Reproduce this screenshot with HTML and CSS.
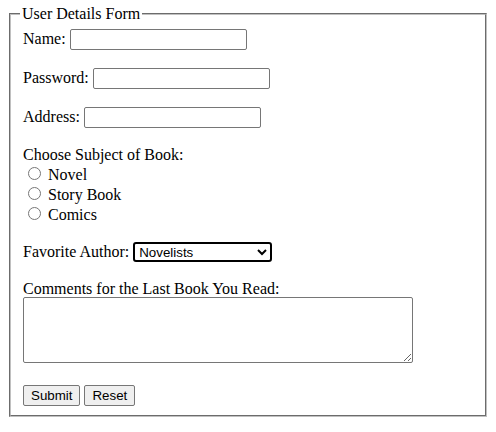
FILE: index.html
```html
<!DOCTYPE html>
<html>
<head>
<meta charset="utf-8">
<title>User Details Form</title>
<link rel="stylesheet" href="styles.css">
</head>
<body class="page">
<form class="user-form">
<fieldset class="form-box">
<legend class="form-legend">User Details Form</legend>
Name: <input class="field" type="text" name="name"><br><br>
Password: <input class="field" type="password" name="password"><br><br>
Address: <input class="field" type="text" name="address"><br><br>
Choose Subject of Book:<br>
<input class="radio" type="radio" name="subject" value="novel"> Novel<br>
<input class="radio" type="radio" name="subject" value="story"> Story Book<br>
<input class="radio" type="radio" name="subject" value="comics"> Comics<br>
<br>
Favorite Author: <select class="author" name="author">
<option>Novelists</option>
<option>Story Writers</option>
<option>Comic Artists</option>
</select><br><br>
Comments for the Last Book You Read:<br>
<textarea class="comments" name="comments"></textarea><br><br>
<input class="btn" type="submit" value="Submit"> <input class="btn" type="reset" value="Reset">
</fieldset>
</form>
</body>
</html>
```
FILE: styles.css
```css
.page {
  margin: 5px 8px 8px 8px;
  font-family: "Liberation Serif", "Times New Roman", serif;
  font-size: 16px;
  color: #000;
  background: #fff;
}
.user-form {
  margin: 0;
}
.form-box {
  margin: 0 1px;
  padding: 6px 12px 9px 12px;
  border: 2px groove #c0c0c0;
}
.form-legend {
  padding: 0 2px;
  margin-left: -3px;
}
.field {
  box-sizing: border-box;
  width: 177px;
  height: 21px;
  font-family: "Liberation Sans", Arial, sans-serif;
  font-size: 13.333px;
  border: 1px solid #767676;
  border-radius: 2px;
  padding: 1px 2px;
  margin: 0;
}
.radio {
  margin: 3px 3px 0 5px;
}
.author {
  box-sizing: border-box;
  width: 139px;
  height: 20px;
  font-family: "Liberation Sans", Arial, sans-serif;
  font-size: 13.333px;
  border: 2px solid #000;
  border-radius: 3px;
  background: #fff;
  color: #000;
  padding: 0;
  margin: 0;
}
.comments {
  box-sizing: border-box;
  width: 390px;
  height: 66px;
  border: 1px solid #767676;
  border-radius: 2px;
  margin: -1px 0 0 0;
  font-family: "Liberation Mono", monospace;
  font-size: 13.333px;
}
.btn {
  box-sizing: border-box;
  height: 21px;
  font-family: "Liberation Sans", Arial, sans-serif;
  font-size: 13.333px;
  padding: 1px 7px;
  background: #efefef;
  border: 1px solid #767676;
  border-radius: 2px;
  margin: 0;
  color: #000;
}
```
